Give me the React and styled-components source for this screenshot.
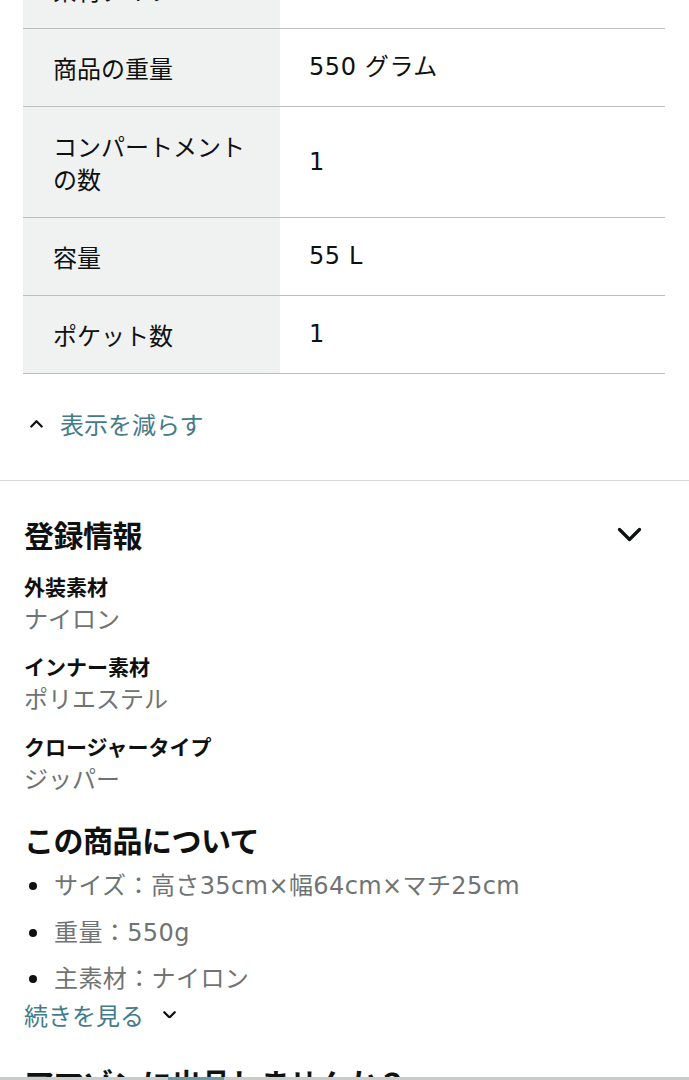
import React from "react";
import styled, { createGlobalStyle } from "styled-components";

const GlobalStyle = createGlobalStyle`
  body {
    margin: 0;
    background: #ffffff;
    font-family: "DejaVu Sans", "Noto Sans CJK JP", sans-serif;
    color: #0f1111;
    overflow: hidden;
  }
`;

const Page = styled.div`
  width: 689px;
  height: 1080px;
  overflow: hidden;
`;

const Table = styled.div`
  margin: -49px 24px 0 23px;
  display: flex;
  flex-direction: column;
`;

const Row = styled.div`
  display: grid;
  grid-template-columns: 257px 1fr;
  border-bottom: 1px solid #bbbfbf;
`;

const Cell = styled.div`
  padding: 22px 30px 22px ${(p) => (p.$label ? "30px" : "29px")};
  background: ${(p) => (p.$label ? "#f0f2f2" : "#ffffff")};
  font-family: "Noto Sans CJK JP", sans-serif;
  font-size: 24px;
  line-height: 33px;
  color: #0f1111;
  display: flex;
  align-items: center;
`;

const Value = styled(Cell)`
  font-family: "DejaVu Sans", "Noto Sans CJK JP", sans-serif;
  letter-spacing: 0.6px;
`;

const ToggleLink = styled.div`
  display: flex;
  align-items: center;
  gap: 17px;
  margin: 33px 0 0 30px;
  font-family: "Noto Sans CJK JP", sans-serif;
  font-size: 24px;
  line-height: 34px;
  color: #427b8b;
`;

const Divider = styled.hr`
  margin: 39px 0 0;
  border: none;
  border-top: 1px solid #d5d9d9;
`;

const Section = styled.section`
  padding: 0 24px;
`;

const SectionHead = styled.div`
  display: flex;
  align-items: center;
  justify-content: space-between;
  margin-top: ${(p) => p.$top || "0px"};
  padding-right: 23px;
`;

const Heading = styled.h2`
  margin: 0;
  font-family: "Noto Sans CJK JP", sans-serif;
  font-size: 30px;
  line-height: 40px;
  font-weight: 700;
  color: #0f1111;
  letter-spacing: -0.5px;
`;

const Spec = styled.div`
  margin-top: ${(p) => p.$top || "17px"};
`;

const SpecName = styled.div`
  font-family: "Noto Sans CJK JP", sans-serif;
  font-size: 21px;
  line-height: 28px;
  font-weight: 700;
  color: #0f1111;
`;

const SpecValue = styled.div`
  margin-top: 2px;
  font-family: "Noto Sans CJK JP", sans-serif;
  font-size: 24px;
  line-height: 32px;
  color: #6f7373;
`;

const Bullets = styled.ul`
  margin: 4px 0 0;
  padding: 0;
  list-style: none;
`;

const Bullet = styled.li`
  position: relative;
  padding-left: 30px;
  font-size: 24px;
  line-height: 46.5px;
  letter-spacing: 0.4px;
  color: #6f7373;

  &::before {
    content: "";
    position: absolute;
    left: 5px;
    top: 19px;
    width: 8px;
    height: 8px;
    border-radius: 50%;
    background: #0f1111;
  }
`;

const MoreLink = styled.div`
  display: flex;
  align-items: center;
  gap: 19px;
  margin-top: -5px;
  font-family: "Noto Sans CJK JP", sans-serif;
  font-size: 24px;
  line-height: 34px;
  color: #427b8b;
`;

const Teaser = styled(Heading)`
  margin-top: 30px;
`;

const BottomBar = styled.div`
  position: fixed;
  left: 0;
  right: 0;
  bottom: 0;
  height: 3px;
  background: #c9cccc;

  &::after {
    content: "";
    position: absolute;
    left: 168px;
    width: 56px;
    top: 0;
    height: 3px;
    background: #6f9aa6;
  }
`;

const Chevron = ({ up, size = 12, width = 3 }) => (
  <svg width={size} height={size * 0.6} viewBox="0 0 20 12" fill="none">
    <path
      d={up ? "M2 10 L10 2 L18 10" : "M2 2 L10 10 L18 2"}
      stroke="#0f1111"
      strokeWidth={width}
      strokeLinecap="round"
      strokeLinejoin="round"
    />
  </svg>
);

const rows = [
  ["素材タイプ", "ナイロン"],
  ["商品の重量", "550 グラム"],
  [
    <>
      コンパートメント
      <br />
      の数
    </>,
    "1",
  ],
  ["容量", "55 L"],
  ["ポケット数", "1"],
];

const specs = [
  ["外装素材", "ナイロン"],
  ["インナー素材", "ポリエステル"],
  ["クロージャータイプ", "ジッパー"],
];

const bullets = [
  "サイズ：高さ35cm×幅64cm×マチ25cm",
  "重量：550g",
  "主素材：ナイロン",
];

export default function App() {
  return (
    <Page>
      <GlobalStyle />
      <Table>
        {rows.map(([k, v], i) => (
          <Row key={i}>
            <Cell $label>
              <span>{k}</span>
            </Cell>
            <Value>{v}</Value>
          </Row>
        ))}
      </Table>
      <ToggleLink>
        <Chevron up size={13} width={3.5} />
        表示を減らす
      </ToggleLink>
      <Divider />
      <Section>
        <SectionHead $top="33px">
          <Heading>登録情報</Heading>
          <Chevron size={25} width={2.6} />
        </SectionHead>
        {specs.map(([k, v]) => (
          <Spec key={k} $top="18px">
            <SpecName>{k}</SpecName>
            <SpecValue>{v}</SpecValue>
          </Spec>
        ))}
        <SectionHead $top="25px">
          <Heading>この商品について</Heading>
        </SectionHead>
        <Bullets>
          {bullets.map((b) => (
            <Bullet key={b}>{b}</Bullet>
          ))}
        </Bullets>
        <MoreLink>
          続きを見る
          <Chevron size={13} width={3.5} />
        </MoreLink>
        <Teaser>アマゾンに出品しませんか？</Teaser>
      </Section>
      <BottomBar />
    </Page>
  );
}
